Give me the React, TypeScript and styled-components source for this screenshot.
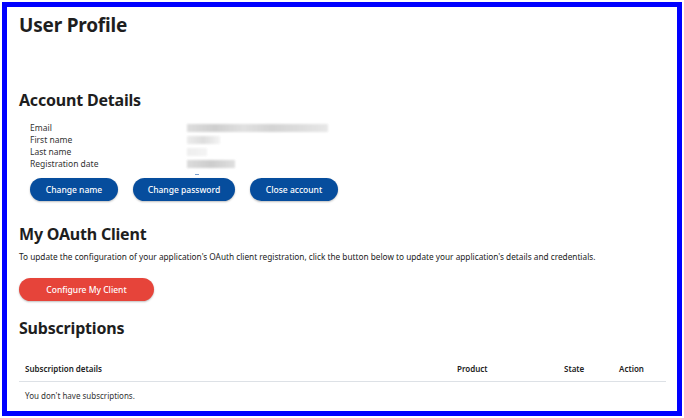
import React from "react";
import styled, { createGlobalStyle } from "styled-components";

const Global = createGlobalStyle`
  html, body { margin: 0; padding: 0; background: #fff; }
  body { font-family: "Noto Sans", "Open Sans", sans-serif; color: #222; }
`;

const Frame = styled.div`
  box-sizing: border-box;
  margin: 2px;
  width: 680px;
  height: 414px;
  border: 5px solid #0000ff;
  padding: 0 0 0 12px;
  overflow: hidden;
`;

const PageTitle = styled.h1`
  margin: 6px 0 0;
  font-size: 19px;
  line-height: 24px;
  font-weight: 700;
  color: #1e1e1e;
  letter-spacing: -0.2px;
`;

const SectionTitle = styled.h2<{ $top: number }>`
  margin: ${(p) => p.$top}px 0 0;
  font-size: 16px;
  line-height: 20px;
  font-weight: 700;
  color: #1e1e1e;
  letter-spacing: -0.2px;
`;

const Details = styled.dl`
  display: grid;
  grid-template-columns: 157px 1fr;
  grid-auto-rows: 12px;
  margin: 12px 0 0 11px;
  font-size: 8.5px;
  line-height: 12px;
  color: #333;
`;

const Label = styled.dt`
  margin: 0;
`;

const Value = styled.dd`
  margin: 0;
  display: flex;
  align-items: center;
`;

const Redacted = styled.span<{ $w: number; $shade: string }>`
  display: block;
  width: ${(p) => p.$w}px;
  height: 8px;
  background: ${(p) => p.$shade};
  filter: blur(0.8px);
  opacity: 0.7;
`;

const Dash = styled.span`
  display: block;
  width: 4px;
  height: 1px;
  margin: 4px 0 0 176px;
  background: #7aa0d0;
`;

const ButtonRow = styled.div`
  display: flex;
  gap: 15px;
  margin: 3px 0 0 11px;
`;

const Pill = styled.button<{ $w: number; $bg: string }>`
  width: ${(p) => p.$w}px;
  height: 23px;
  border: none;
  border-radius: 12px;
  background: ${(p) => p.$bg};
  color: #fff;
  font-family: inherit;
  font-size: 8.5px;
  font-weight: 500;
  padding: 0;
  box-shadow: 0 1px 2px rgba(0, 0, 0, 0.25);
`;

const Paragraph = styled.p`
  margin: 7px 0 0;
  font-size: 8.25px;
  line-height: 12px;
  color: #222;
`;

const CtaWrap = styled.div`
  margin: 13px 0 0;
`;

const Table = styled.div`
  margin: 17px 0 0;
  width: 647px;
  font-size: 8px;
`;

const Row = styled.div<{ $head?: boolean }>`
  display: grid;
  grid-template-columns: 432px 107px 55px 1fr;
  height: 26px;
  align-items: center;
  border-bottom: ${(p) => (p.$head ? "1px solid #dde1e6" : "none")};
  font-weight: ${(p) => (p.$head ? 600 : 400)};
  color: ${(p) => (p.$head ? "#222" : "#333")};
`;

const Cell = styled.div`
  padding-left: 6px;
`;

const details = [
  { label: "Email", w: 141, shade: "linear-gradient(90deg,#cfcfcf,#bbbbbb 20%,#d4d4d4 40%,#c2c2c2 60%,#cfcfcf 80%,#dedede)" },
  { label: "First name", w: 33, shade: "linear-gradient(90deg,#e4e4e4,#d0d0d0 50%,#f0f0f0)" },
  { label: "Last name", w: 20, shade: "linear-gradient(90deg,#e8e8e8,#f0f0f0)" },
  { label: "Registration date", w: 48, shade: "linear-gradient(90deg,#cdcdcd,#b8b8b8 50%,#d2d2d2)" },
];

export default function App() {
  return (
    <>
      <Global />
      <Frame>
        <PageTitle>User Profile</PageTitle>
        <SectionTitle $top={53}>Account Details</SectionTitle>
        <Details>
          {details.map((d) => (
            <React.Fragment key={d.label}>
              <Label>{d.label}</Label>
              <Value>
                <Redacted $w={d.w} $shade={d.shade} />
              </Value>
            </React.Fragment>
          ))}
        </Details>
        <Dash />
        <ButtonRow>
          <Pill $w={88} $bg="#064d9d">Change name</Pill>
          <Pill $w={102} $bg="#064d9d">Change password</Pill>
          <Pill $w={88} $bg="#064d9d">Close account</Pill>
        </ButtonRow>
        <SectionTitle $top={23}>My OAuth Client</SectionTitle>
        <Paragraph>
          To update the configuration of your application's OAuth client registration, click the button below to update your application's details and credentials.
        </Paragraph>
        <CtaWrap>
          <Pill $w={135} $bg="#e6443a">Configure My Client</Pill>
        </CtaWrap>
        <SectionTitle $top={17}>Subscriptions</SectionTitle>
        <Table>
          <Row $head>
            <Cell>Subscription details</Cell>
            <Cell>Product</Cell>
            <Cell>State</Cell>
            <Cell>Action</Cell>
          </Row>
          <Row>
            <Cell>You don't have subscriptions.</Cell>
          </Row>
        </Table>
      </Frame>
    </>
  );
}
